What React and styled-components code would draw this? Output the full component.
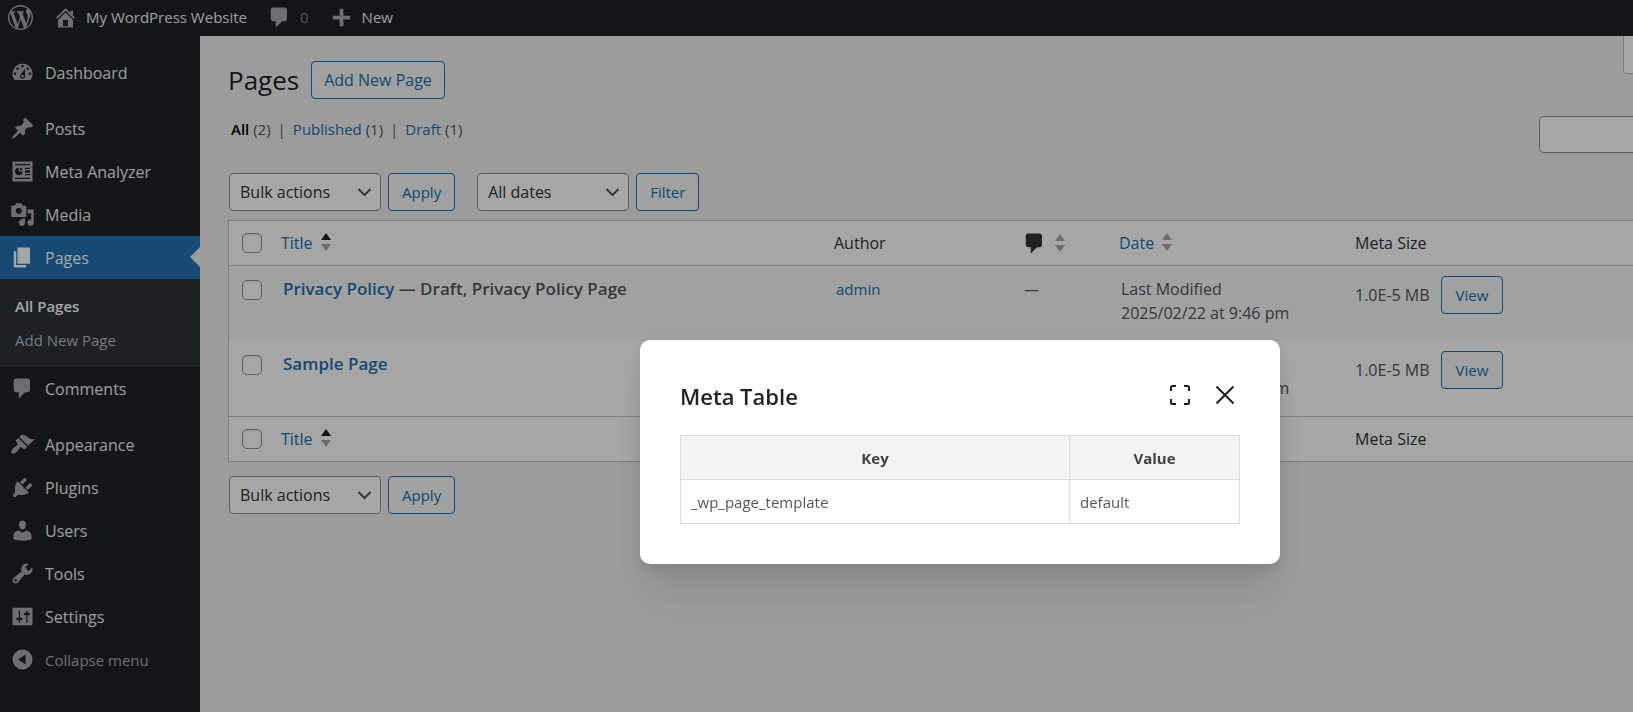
import React from 'react';
import styled, { createGlobalStyle } from 'styled-components'

const GlobalStyle = createGlobalStyle`
    * {
        box-sizing: border-box;
    }

    body {
        margin: 0;
        background: #f0f0f1;
        color: #3c434a;
        font-family: 'Open Sans', 'Noto Sans', sans-serif;
        font-size: 15px;
        line-height: 24px;
    }

    a {
        color: #2271b1;
        text-decoration: none;
    }

    button, input, select {
        font-family: inherit;
    }
`

/* ---------- icons ---------- */

const icons = {
    wordpress: 'M20 10c0-5.51-4.49-10-10-10C4.48 0 0 4.49 0 10c0 5.52 4.48 10 10 10 5.51 0 10-4.48 10-10zM7.78 15.37L4.37 6.22c.55-.02 1.17-.08 1.17-.08.5-.06.44-1.13-.06-1.11 0 0-1.45.11-2.37.11-.18 0-.37 0-.58-.01C4.12 2.69 6.87 1.11 10 1.11c2.33 0 4.45.87 6.05 2.34-.68-.11-1.65.39-1.65 1.58 0 .74.45 1.36.9 2.1.35.61.55 1.36.55 2.46 0 1.49-1.4 5-1.4 5l-3.03-8.37c.54-.02.82-.17.82-.17.5-.05.44-1.25-.06-1.22 0 0-1.44.12-2.38.12-.87 0-2.33-.12-2.33-.12-.5-.03-.56 1.2-.06 1.22l.92.08 1.26 3.41zM17.41 10c.24-.64.74-1.87.43-4.25.7 1.29 1.05 2.71 1.05 4.25 0 3.29-1.73 6.24-4.4 7.78.97-2.59 1.94-5.2 2.92-7.78zM6.1 18.09C3.12 16.65 1.11 13.53 1.11 10c0-1.3.23-2.48.72-3.59C3.25 10.3 4.67 14.2 6.1 18.09zm4.03-6.63l2.58 6.98c-.86.29-1.76.45-2.71.45-.79 0-1.57-.11-2.29-.33.81-2.38 1.62-4.74 2.42-7.1z',
    home: 'M16 8.5l1.53 1.53-1.06 1.06L10 4.6l-6.47 6.49-1.06-1.06L10 2.5l4 4v-2h2v4zm-6-2.46l6 5.99V18H4v-5.97zM12 17v-5H8v5h4z',
    comment: 'M5 2h9c1.1 0 2 .9 2 2v7c0 1.1-.9 2-2 2h-2l-5 5v-5H5c-1.1 0-2-.9-2-2V4c0-1.1.9-2 2-2z',
    plus: 'M17 8.5v3h-5.500v5.500h-3v-5.500H3v-3h5.500V3h3v5.500H17z',
    dashboard: 'M3.76 16h12.48A7.998 7.998 0 0 0 10 3a7.998 7.998 0 0 0-6.24 13zM10 4c.55 0 1 .45 1 1s-.45 1-1 1-1-.45-1-1 .45-1 1-1zM6 6c.55 0 1 .45 1 1s-.45 1-1 1-1-.45-1-1 .45-1 1-1zm8 0c.55 0 1 .45 1 1s-.45 1-1 1-1-.45-1-1 .45-1 1-1zm-5.37 5.55L12 7v6c0 1.1-.9 2-2 2s-2-.9-2-2c0-.57.24-1.08.63-1.45zM4 10c.55 0 1 .45 1 1s-.45 1-1 1-1-.45-1-1 .45-1 1-1zm12 0c.55 0 1 .45 1 1s-.45 1-1 1-1-.45-1-1 .45-1 1-1zm-5 3c0-.55-.45-1-1-1s-1 .45-1 1 .45 1 1 1 1-.45 1-1z',
    post: 'M10.44 3.02l1.82-1.82 6.36 6.35-1.83 1.82c-1.05-.68-2.48-.57-3.41.36l-.75.75c-.92.93-1.04 2.35-.35 3.41l-1.83 1.82-2.41-2.41-2.8 2.79c-.42.42-3.38 2.71-3.8 2.29s1.86-3.39 2.28-3.81l2.79-2.79L4.1 9.36l1.83-1.82c1.05.69 2.48.57 3.4-.36l.75-.75c.93-.92 1.05-2.35.36-3.41z',
    analytics: 'M18 18V2H2v16h16zM16 5H4V4h12v1zM7 7v3h3c0 1.66-1.34 3-3 3s-3-1.34-3-3 1.34-3 3-3zm1 2V7c1.1 0 2 .9 2 2H8zm8-1h-4V7h4v1zm0 3h-4V9h4v2zm0 2h-4v-1h4v1zm0 3H4v-1h12v1z',
    media: 'M13 11V4c0-.55-.45-1-1-1h-1.67L9 1H5L3.67 3H2c-.55 0-1 .45-1 1v7c0 .55.45 1 1 1h10c.55 0 1-.45 1-1zM7 4.5c1.38 0 2.5 1.12 2.5 2.5S8.38 9.5 7 9.5 4.5 8.38 4.5 7 5.62 4.5 7 4.5zM14 6h5v10.5c0 1.38-1.12 2.5-2.5 2.5S14 17.88 14 16.5s1.12-2.5 2.5-2.5c.17 0 .34.02.5.05V9h-3V6zm-4 8.05V13h2v3.5c0 1.38-1.12 2.5-2.5 2.5S7 17.88 7 16.5 8.12 14 9.5 14c.17 0 .34.02.5.05z',
    page: 'M6 15V2h10v13H6zm-1 1h8v2H3V5h2v11z',
    appearance: 'M14.48 11.06L7.41 3.99l1.5-1.5c.5-.56 2.3-.47 3.51.32 1.21.8 1.43 1.28 2.91 2.1 1.18.64 2.45 1.26 4.45.85zm-.71.71L6.7 4.7 4.93 6.47c-.39.39-.39 1.02 0 1.41l1.06 1.06c.39.39.39 1.03 0 1.42-.6.6-1.43 1.11-2.21 1.69-.35.26-.7.53-1.01.84C1.43 14.23.4 16.08 1.4 17.07c.99 1 2.84-.03 4.18-1.36.31-.31.58-.66.85-1.02.57-.78 1.08-1.61 1.69-2.21.39-.39 1.02-.39 1.41 0l1.06 1.06c.39.39 1.02.39 1.41 0z',
    plugins: 'M13.11 4.36L9.87 7.6 8 5.73l3.24-3.24c.35-.34 1.05-.2 1.56.32.52.51.66 1.21.31 1.55zm-8 1.77l.91-1.12 9.01 9.01-1.19.84c-.71.71-2.63 1.16-3.82 1.16H6.14L4.9 17.26c-.59.59-1.54.59-2.12 0-.59-.58-.59-1.53 0-2.12l1.24-1.24v-3.88c0-1.13.4-3.19 1.09-3.89zm7.26 3.97l3.24-3.24c.34-.35 1.04-.21 1.55.31.52.51.66 1.21.31 1.55l-3.24 3.25z',
    users: 'M10 9.25c-2.27 0-2.73-3.44-2.73-3.44C7 4.02 7.82 2 9.97 2c2.16 0 2.98 2.02 2.71 3.81 0 0-.41 3.44-2.68 3.44zm0 2.57L12.72 10c2.39 0 4.52 2.33 4.52 4.53v2.49s-3.65 1.13-7.24 1.13c-3.65 0-7.24-1.13-7.24-1.13v-2.49c0-2.25 1.94-4.48 4.47-4.48z',
    tools: 'M16.68 9.77c-1.34 1.34-3.3 1.67-4.95.99l-5.41 6.52c-.99.99-2.59.99-3.58 0s-.99-2.59 0-3.57l6.52-5.42c-.68-1.65-.35-3.61.99-4.95 1.28-1.28 3.12-1.62 4.72-1.06l-2.89 2.89 2.82 2.82 2.86-2.87c.53 1.58.18 3.39-1.08 4.65zM3.81 16.21c.4.39 1.04.39 1.43 0 .4-.4.4-1.04 0-1.43-.39-.4-1.03-.4-1.43 0-.39.39-.39 1.03 0 1.43z',
    settings: 'M18 16V4c0-.55-.45-1-1-1H3c-.55 0-1 .45-1 1v12c0 .55.45 1 1 1h14c.55 0 1-.45 1-1zM8 11h1c.55 0 1 .45 1 1s-.45 1-1 1H8v1.5c0 .28-.22.5-.5.5s-.5-.22-.5-.5V13H6c-.55 0-1-.45-1-1s.45-1 1-1h1V5.500c0-.28.22-.5.5-.5s.5.22.5.5V11zm5-2h-1c-.55 0-1-.45-1-1s.45-1 1-1h1V5.500c0-.28.22-.5.5-.5s.5.22.5.5V7h1c.55 0 1 .45 1 1s-.45 1-1 1h-1v5.500c0 .28-.22.5-.5.5s-.5-.22-.5-.5V9z',
    collapse: 'M10 2a8 8 0 1 0 0 16 8 8 0 0 0 0-16zM12.500 6v8L6.500 10z',
}

const Svg = styled.svg`
    display: block;
    flex: none;
    fill: currentColor;
`

function Icon ({name, size = 25}) {
    return (
        <Svg width={size} height={size} viewBox="0 0 20 20" fillRule="evenodd" aria-hidden="true">
            <path d={icons[name]} />
        </Svg>
    );
}

/* ---------- admin bar ---------- */

const AdminBar = styled.header`
    display: flex;
    align-items: center;
    gap: 20px;
    height: 36px;
    padding: 0 8px 2px 8px;
    background: #1d2327;
`
const BarLink = styled.a`
    display: flex;
    align-items: center;
    gap: 8px;
    color: #f0f0f1;

    svg{
        color: #a7aaad;
    }
`
const BarCount = styled.span`
    color: #a7aaad;
    opacity: .7;
`

/* ---------- side menu ---------- */

const Body = styled.div`
    display: flex;
    min-height: calc(100vh - 36px);
`
const SideMenu = styled.nav`
    flex: none;
    width: 200px;
    padding: 15px 0;
    background: #1d2327;
`
const MenuList = styled.ul`
    margin: 0 0 13px 0;
    padding: 0;
    list-style: none;

    &:last-of-type{
        margin-bottom: 0;
    }
`
const MenuLink = styled.a`
    position: relative;
    display: flex;
    align-items: center;
    gap: 10px;
    height: 43px;
    padding-left: 10px;
    font-size: 16px;
    color: ${props => props.$current ? '#fff' : '#f0f0f1'};
    background: ${props => props.$current ? '#2271b1' : 'transparent'};

    svg{
        color: ${props => props.$current ? '#fff' : '#a7aaad'};
    }

    &::after{
        content: '';
        display: ${props => props.$current ? 'block' : 'none'};
        position: absolute;
        right: 0;
        top: 11px;
        border: 10px solid transparent;
        border-left-width: 0;
        border-right-color: #f0f0f1;
    }
`
const SubMenu = styled.ul`
    margin: 0;
    padding: 10px 15px;
    list-style: none;
    background: #2c3338;
`
const SubLink = styled.a`
    display: block;
    line-height: 34px;
    font-weight: ${props => props.$current ? 600 : 400};
    color: ${props => props.$current ? '#fff' : '#b5bcc2'};
`
const CollapseButton = styled.button`
    display: flex;
    align-items: center;
    gap: 10px;
    height: 43px;
    padding: 0 0 0 10px;
    border: 0;
    background: none;
    font-size: 15px;
    color: #a7aaad;
`

/* ---------- page content ---------- */

const Main = styled.main`
    flex: 1;
    min-width: 0;
    overflow: hidden;
`
const Wrap = styled.div`
    margin: 0 -262px 0 28px;
`
const TitleRow = styled.div`
    display: flex;
    justify-content: space-between;
    align-items: flex-start;
`
const Heading = styled.div`
    display: flex;
    align-items: center;
    gap: 12px;
    padding-top: 25px;

    h1{
        margin: 0;
        font-size: 26px;
        font-weight: 400;
        line-height: 38px;
        color: #1d2327;
    }
`
const ScreenOptions = styled.button`
    width: 272px;
    height: 38px;
    border: 1px solid #c3c4c7;
    border-top: 0;
    border-radius: 0 0 4px 4px;
    background: #fff;
`
const Button = styled.button`
    height: 38px;
    padding: 0 13px;
    border: 1px solid #2271b1;
    border-radius: 4px;
    background: #f6f7f7;
    font-size: 15px;
    color: #2271b1;
`
const TitleAction = styled(Button)`
    padding: 0 12px;
    font-size: 16px;
`
const FilterRow = styled.div`
    display: flex;
    justify-content: space-between;
    align-items: flex-start;
    margin: 17px 0 20px 0;
`
const Views = styled.ul`
    display: flex;
    margin: 0;
    padding: 0 0 0 3px;
    list-style: none;
    line-height: 26px;
    color: #50575e;

    li + li::before{
        content: '|';
        margin: 0 7px;
    }
`
const CurrentView = styled.a`
    font-weight: 600;
    color: #000;
`
const SearchBox = styled.input`
    width: 356px;
    height: 37px;
    padding: 0 10px;
    border: 1px solid #8c8f94;
    border-radius: 5px;
    background: #fff;
`
const TableNav = styled.div`
    display: flex;
    gap: 22px;
    margin: ${props => props.$bottom ? '14px' : 0} 0 ${props => props.$bottom ? 0 : '9px'} 1px;
`
const Group = styled.div`
    display: flex;
    gap: 7px;
`
const SelectBox = styled.span`
    position: relative;
    display: block;

    select{
        appearance: none;
        width: 152px;
        height: 38px;
        padding: 0 30px 0 10px;
        border: 1px solid #8c8f94;
        border-radius: 4px;
        background: #fff;
        font-size: 16px;
        color: #2c3338;
    }

    svg{
        position: absolute;
        right: 9px;
        top: 13px;
        pointer-events: none;
    }
`

const PageTable = styled.table`
    width: 100%;
    table-layout: fixed;
    border: 1px solid #c3c4c7;
    border-spacing: 0;
    background: #fff;

    th, td{
        padding: 10px;
        text-align: left;
        vertical-align: top;
        font-weight: 400;
    }

    thead th, tfoot th{
        height: 45px;
        padding-bottom: 9px;
        font-size: 16px;
        color: #2c3338;
    }

    thead th{
        border-bottom: 1px solid #c3c4c7;
    }

    tfoot th{
        border-top: 1px solid #c3c4c7;
    }

    tbody td, tbody th{
        height: 75px;
        color: #50575e;
    }

    tbody th{
        padding-top: 12px;
    }

    tbody td{
        padding-top: 11px;
        padding-left: 12px;
    }

    tbody td:last-child{
        padding-top: 10px;
        padding-left: 10px;
    }

    tbody tr:nth-child(odd){
        background: #f6f7f7;
    }
`
const CheckBox = styled.input`
    appearance: none;
    display: block;
    width: 20px;
    height: 20px;
    margin: 2px 0 0 3px;
    border: 1px solid #8c8f94;
    border-radius: 5px;
    background: #fff;
    box-shadow: inset 0 1px 2px rgba(0, 0, 0, 0.1);
`
const RowTitle = styled.strong`
    font-size: 17px;
    font-weight: 600;
`
const SortLink = styled.a`
    display: flex;
    align-items: center;
    gap: 8px;
`
const CommentSort = styled(SortLink)`
    color: #2c3338;
`
const PageDate = styled.div`
    font-size: 16px;
`
const MetaCell = styled.div`
    display: flex;
    align-items: center;
    gap: 11px;
    font-size: 16px;
`
const ViewButton = styled(Button)`
    padding: 0 14px;
`

function Sorter ({active}) {
    return (
        <Svg width="10" height="20" viewBox="0 0 10 20" aria-hidden="true">
            <path d="M5 0l5 7H0z" fill={active ? '#1d2327' : '#a7aaad'} />
            <path d="M5 18l5-7H0z" fill="#a7aaad" />
        </Svg>
    );
}

function Select ({label, value}) {
    return (
        <SelectBox>
            <select aria-label={label}>
                <option>{value}</option>
            </select>
            <svg width="15" height="12" viewBox="0 0 15 12" fill="none" stroke="#50575e" strokeWidth="2" aria-hidden="true">
                <path d="M1.500 3l6 6 6-6" />
            </svg>
        </SelectBox>
    );
}

function BulkActions () {
    return (
        <Group>
            <Select label="Select bulk action" value="Bulk actions" />
            <Button>Apply</Button>
        </Group>
    );
}

function HeadingCells () {
    return (
        <tr>
            <th><CheckBox type="checkbox" aria-label="Select All" /></th>
            <th><SortLink href="#title">Title <Sorter active /></SortLink></th>
            <th>Author</th>
            <th><CommentSort href="#comments" aria-label="Comments"><Icon name="comment" /><Sorter /></CommentSort></th>
            <th><SortLink href="#date">Date <Sorter /></SortLink></th>
            <th>Meta Size</th>
        </tr>
    );
}

const pages = [
    {title: 'Privacy Policy', state: ' — Draft, Privacy Policy Page', status: 'Last Modified', date: '2025/02/22 at 9:46 pm', size: '1.0E-5 MB'},
    {title: 'Sample Page', state: '', status: 'Published', date: '2025/02/22 at 9:46 pm', size: '1.0E-5 MB'},
]

/* ---------- modal ---------- */

const Overlay = styled.div`
    position: fixed;
    inset: 0;
    display: flex;
    align-items: center;
    justify-content: center;
    padding: 192px 0 0 287px;
    background: rgba(0, 0, 0, 0.35);
`
const Modal = styled.section`
    width: 640px;
    max-width: 100%;
    padding: 40px;
    border-radius: 10px;
    background: #fff;
    box-shadow: 0 6px 19px rgba(0, 0, 0, 0.08), 0 19px 34px rgba(0, 0, 0, 0.07), 0 38px 45px rgba(0, 0, 0, 0.04), 0 63px 54px rgba(0, 0, 0, 0.02);
`
const ModalHeader = styled.div`
    display: flex;
    align-items: flex-start;
    justify-content: space-between;
    margin-bottom: 23px;

    h2{
        margin: 0;
        font-size: 22px;
        font-weight: 600;
        line-height: 32px;
        color: #1d2327;
    }
`
const ModalTools = styled.div`
    display: flex;
    gap: 15px;
`
const IconButton = styled.button`
    width: 30px;
    height: 30px;
    padding: 0;
    border: 0;
    background: none;
    color: #1e1e1e;

    svg{
        display: block;
        margin: 0 auto;
        fill: none;
        stroke: currentColor;
        stroke-width: 2;
    }
`
const MetaTable = styled.table`
    width: 100%;
    border-collapse: collapse;

    th, td{
        height: 44px;
        padding: 0 10px;
        border: 1px solid #dcdcde;
        text-align: left;
        color: #50575e;
    }

    th{
        background: #f3f3f3;
        text-align: center;
        font-weight: 700;
        color: #3c434a;
    }
`

function MenuItem ({icon, current, children}) {
    return <MenuLink href="#" $current={current}><Icon name={icon} />{children}</MenuLink>;
}

export default function App () {
    return (
        <>
            <GlobalStyle />
            <AdminBar>
                <BarLink href="#" aria-label="About WordPress"><Icon name="wordpress" /></BarLink>
                <BarLink href="#"><Icon name="home" />My WordPress Website</BarLink>
                <BarLink href="#"><Icon name="comment" /><BarCount>0</BarCount></BarLink>
                <BarLink href="#"><Icon name="plus" />New</BarLink>
            </AdminBar>
            <Body>
                <SideMenu>
                    <MenuList>
                        <li><MenuItem icon="dashboard">Dashboard</MenuItem></li>
                    </MenuList>
                    <MenuList>
                        <li><MenuItem icon="post">Posts</MenuItem></li>
                        <li><MenuItem icon="analytics">Meta Analyzer</MenuItem></li>
                        <li><MenuItem icon="media">Media</MenuItem></li>
                        <li>
                            <MenuItem icon="page" current>Pages</MenuItem>
                            <SubMenu>
                                <li><SubLink href="#" $current>All Pages</SubLink></li>
                                <li><SubLink href="#">Add New Page</SubLink></li>
                            </SubMenu>
                        </li>
                        <li><MenuItem icon="comment">Comments</MenuItem></li>
                    </MenuList>
                    <MenuList>
                        <li><MenuItem icon="appearance">Appearance</MenuItem></li>
                        <li><MenuItem icon="plugins">Plugins</MenuItem></li>
                        <li><MenuItem icon="users">Users</MenuItem></li>
                        <li><MenuItem icon="tools">Tools</MenuItem></li>
                        <li><MenuItem icon="settings">Settings</MenuItem></li>
                    </MenuList>
                    <CollapseButton><Icon name="collapse" />Collapse menu</CollapseButton>
                </SideMenu>
                <Main>
                    <Wrap>
                        <TitleRow>
                            <Heading>
                                <h1>Pages</h1>
                                <TitleAction>Add New Page</TitleAction>
                            </Heading>
                            <ScreenOptions aria-label="Screen Options" />
                        </TitleRow>
                        <FilterRow>
                            <Views>
                                <li><CurrentView href="#">All</CurrentView> (2)</li>
                                <li><a href="#">Published</a> (1)</li>
                                <li><a href="#">Draft</a> (1)</li>
                            </Views>
                            <SearchBox type="search" aria-label="Search Pages" />
                        </FilterRow>
                        <TableNav>
                            <BulkActions />
                            <Group>
                                <Select label="Filter by date" value="All dates" />
                                <Button>Filter</Button>
                            </Group>
                        </TableNav>
                        <PageTable>
                            <colgroup>
                                <col width="42" />
                                <col />
                                <col width="188" />
                                <col width="97" />
                                <col width="236" />
                                <col width="549" />
                            </colgroup>
                            <thead><HeadingCells /></thead>
                            <tbody>
                                {pages.map(page => (
                                    <tr key={page.title}>
                                        <th><CheckBox type="checkbox" aria-label={`Select ${page.title}`} /></th>
                                        <td><RowTitle><a href="#">{page.title}</a>{page.state}</RowTitle></td>
                                        <td><a href="#">admin</a></td>
                                        <td>—</td>
                                        <td><PageDate>{page.status}<br />{page.date}</PageDate></td>
                                        <td><MetaCell>{page.size}<ViewButton>View</ViewButton></MetaCell></td>
                                    </tr>
                                ))}
                            </tbody>
                            <tfoot><HeadingCells /></tfoot>
                        </PageTable>
                        <TableNav $bottom>
                            <BulkActions />
                        </TableNav>
                    </Wrap>
                </Main>
            </Body>
            <Overlay>
                <Modal role="dialog" aria-labelledby="meta-table-title">
                    <ModalHeader>
                        <h2 id="meta-table-title">Meta Table</h2>
                        <ModalTools>
                            <IconButton aria-label="Fullscreen">
                                <svg width="20" height="20" viewBox="0 0 20 20" aria-hidden="true">
                                    <path d="M1 6V2.500Q1 1 2.500 1H6M14 1h3.500Q19 1 19 2.500V6M19 14v3.500q0 1.500-1.500 1.500H14M6 19H2.500Q1 19 1 17.500V14" />
                                </svg>
                            </IconButton>
                            <IconButton aria-label="Close">
                                <svg width="18" height="18" viewBox="0 0 18 18" aria-hidden="true">
                                    <path d="M.5.5l17 17M17.500.5l-17 17" />
                                </svg>
                            </IconButton>
                        </ModalTools>
                    </ModalHeader>
                    <MetaTable>
                        <colgroup>
                            <col />
                            <col width="170" />
                        </colgroup>
                        <thead>
                            <tr><th>Key</th><th>Value</th></tr>
                        </thead>
                        <tbody>
                            <tr><td>_wp_page_template</td><td>default</td></tr>
                        </tbody>
                    </MetaTable>
                </Modal>
            </Overlay>
        </>
    );
}
